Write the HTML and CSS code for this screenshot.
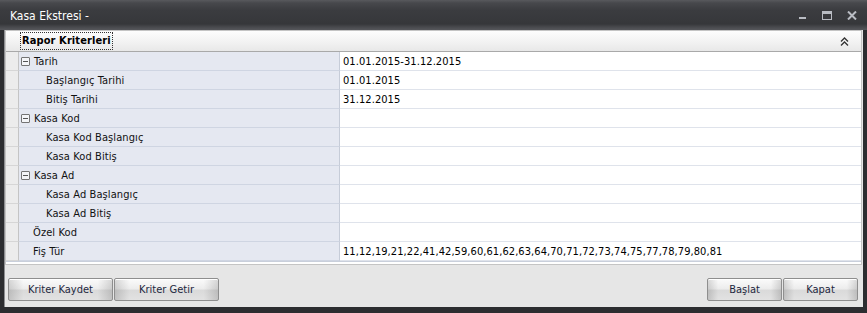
FILE: index.html
```html
<!DOCTYPE html>
<html>
<head>
<meta charset="utf-8">
<link rel="stylesheet" href="styles.css">
</head>
<body>
<div class="window">
  <div class="titlebar">
    <span class="title">Kasa Ekstresi -</span>
    <div class="controls">
      <svg class="ctl" width="9" height="9" viewBox="0 0 9 9"><rect x="1" y="6" width="7" height="2" fill="#b9bcc3"/></svg>
      <svg class="ctl" width="10" height="9" viewBox="0 0 10 9"><rect x="0.5" y="0.5" width="9" height="8" fill="none" stroke="#b9bcc3"/><rect x="1" y="1" width="8" height="2" fill="#b9bcc3"/></svg>
      <svg class="ctl" width="10" height="9" viewBox="0 0 10 9"><path d="M1 0.5 L9 8.5 M9 0.5 L1 8.5" stroke="#b9bcc3" stroke-width="2"/></svg>
    </div>
  </div>
  <div class="client">
    <div class="panel">
      <div class="panel-head">
        <span class="head-title">Rapor Kriterleri</span>
        <svg class="collapse" width="9" height="9" viewBox="0 0 9 9"><path d="M1 4.5 L4.5 1 L8 4.5 M1 8.5 L4.5 5 L8 8.5" fill="none" stroke="#333" stroke-width="1.3"/></svg>
      </div>
      <div class="grid">
        <div class="row"><div class="gut"></div><div class="lab"><span class="box"></span>Tarih</div><div class="val">01.01.2015-31.12.2015</div></div>
        <div class="row"><div class="gut"></div><div class="lab child">Başlangıç Tarihi</div><div class="val">01.01.2015</div></div>
        <div class="row"><div class="gut"></div><div class="lab child">Bitiş Tarihi</div><div class="val">31.12.2015</div></div>
        <div class="row"><div class="gut"></div><div class="lab"><span class="box"></span>Kasa Kod</div><div class="val"></div></div>
        <div class="row"><div class="gut"></div><div class="lab child">Kasa Kod Başlangıç</div><div class="val"></div></div>
        <div class="row"><div class="gut"></div><div class="lab child">Kasa Kod Bitiş</div><div class="val"></div></div>
        <div class="row"><div class="gut"></div><div class="lab"><span class="box"></span>Kasa Ad</div><div class="val"></div></div>
        <div class="row"><div class="gut"></div><div class="lab child">Kasa Ad Başlangıç</div><div class="val"></div></div>
        <div class="row"><div class="gut"></div><div class="lab child">Kasa Ad Bitiş</div><div class="val"></div></div>
        <div class="row"><div class="gut"></div><div class="lab plain">Özel Kod</div><div class="val"></div></div>
        <div class="row"><div class="gut"></div><div class="lab plain">Fiş Tür</div><div class="val">11,12,19,21,22,41,42,59,60,61,62,63,64,70,71,72,73,74,75,77,78,79,80,81</div></div>
      </div>
    </div>
    <div class="buttons">
      <button class="btn wide">Kriter Kaydet</button>
      <button class="btn wide">Kriter Getir</button>
      <div class="spacer"></div>
      <button class="btn">Başlat</button>
      <button class="btn">Kapat</button>
    </div>
  </div>
</div>
</body>
</html>
```
FILE: styles.css
```css
html, body {
  margin: 0;
  padding: 0;
}
body {
  width: 867px;
  height: 313px;
  overflow: hidden;
  background: #2c2d30;
  font-family: "DejaVu Sans Condensed", "DejaVu Sans", sans-serif;
  font-stretch: condensed;
  font-size: 11px;
  color: #000;
}
.window {
  width: 867px;
  height: 313px;
  display: flex;
  flex-direction: column;
  background: #2c2d30;
}
.titlebar {
  height: 30px;
  flex: none;
  display: flex;
  align-items: center;
  background: linear-gradient(#58595d 0px, #47484c 3px, #3b3c40 10px, #36373a 24px, #48494d 27px, #56575b 30px);
  padding: 0 10px 0 10px;
  box-sizing: border-box;
}
.title {
  color: #fff;
  font-size: 12px;
  margin-top: 1px;
}
.controls {
  margin-left: auto;
  display: flex;
  align-items: center;
  gap: 15px;
  margin-top: 0px;
}
.ctl { display: block; }
.client {
  flex: 1;
  margin: 0 4px 6px 4px;
  background: #e6e6e6;
  border-left: 1px solid #8d8e91;
  display: flex;
  flex-direction: column;
}
.panel {
  height: 235px;
  box-sizing: border-box;
  border: 1px solid #c4c4c4;
  background: #fff;
  margin-right: 1px;
  display: flex;
  flex-direction: column;
}
.panel-head {
  height: 21px;
  flex: none;
  box-sizing: border-box;
  border-bottom: 1px solid #a9a9a9;
  background: linear-gradient(#fdfdfd, #f1f1f1 60%, #e8e8e8);
  display: flex;
  align-items: center;
  padding: 0 12px 0 15px;
}
.head-title {
  font-weight: bold;
  outline: 1px dotted #333;
  padding: 1px 1px;
  line-height: 14px;
  letter-spacing: 0.1px;
}
.collapse {
  margin-left: auto;
  display: block;
}
.grid {
  display: flex;
  flex-direction: column;
  border-bottom: 1px solid #c9cfdb;
}
.row {
  display: flex;
  height: 19px;
  box-sizing: border-box;
}
.gut {
  width: 13px;
  flex: none;
  box-sizing: border-box;
  background: #ececec;
  border-right: 1px solid #c4c4c4;
  border-bottom: 1px solid #d6d6d6;
}
.lab {
  width: 321px;
  flex: none;
  box-sizing: border-box;
  background: #e5e8f1;
  border-right: 1px solid #c6ccd8;
  border-bottom: 1px solid #cfd5e2;
  display: flex;
  align-items: center;
  padding-left: 2px;
  color: #111;
  letter-spacing: 0.1px;
}
.lab.child { padding-left: 27px; }
.lab.plain { padding-left: 14px; }
.box {
  width: 7px;
  height: 7px;
  border: 1px solid #747474;
  border-radius: 1px;
  margin-right: 4px;
  position: relative;
  flex: none;
  background: #f4f5f8;
}
.box::after {
  content: "";
  position: absolute;
  left: 1px;
  right: 1px;
  top: 3px;
  height: 1px;
  background: #555;
}
.val {
  flex: 1;
  box-sizing: border-box;
  border-bottom: 1px solid #dfe3eb;
  display: flex;
  align-items: center;
  padding-left: 3px;
  color: #000;
  letter-spacing: 0.07px;
}
.buttons {
  display: flex;
  align-items: flex-start;
  padding: 13px 5px 0 3px;
  gap: 1px;
}
.spacer { flex: 1; }
.btn {
  font-family: inherit;
  font-stretch: condensed;
  font-size: 11px;
  color: #1d2740;
  height: 23px;
  width: 75px;
  margin: 0;
  padding: 0;
  border: 1px solid #8e8e8e;
  border-radius: 2px;
  background:
    linear-gradient(to right, rgba(0,0,0,0.14), rgba(0,0,0,0) 14%, rgba(0,0,0,0) 86%, rgba(0,0,0,0.14)),
    linear-gradient(#fbfbfb, #ededed 45%, #dadada 55%, #e2e2e2);
  box-shadow: inset 0 1px 0 #fff;
}
.btn.wide { width: 105px; }
```
